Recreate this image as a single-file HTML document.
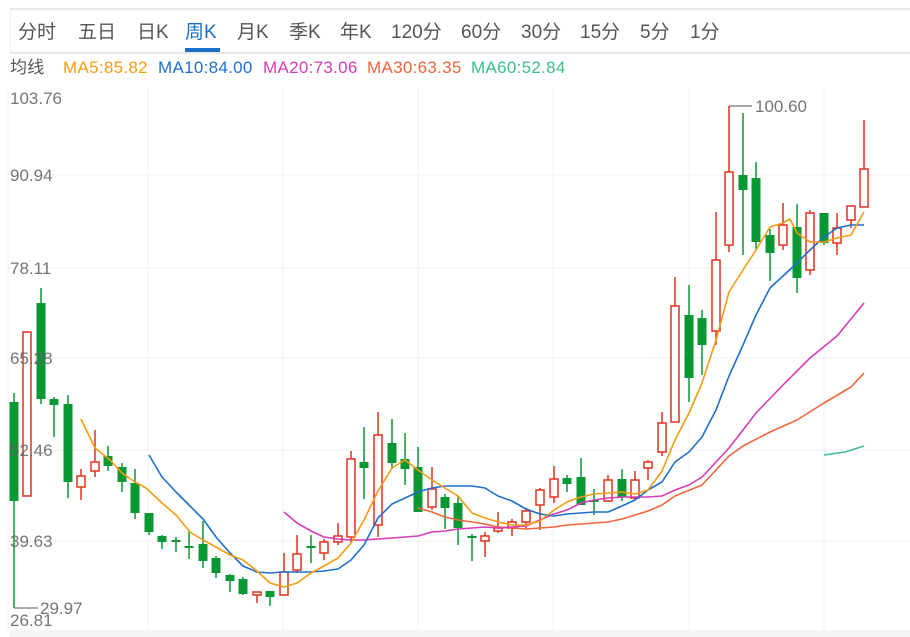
<!DOCTYPE html>
<html><head><meta charset="utf-8"><style>
html,body{margin:0;padding:0;background:#fff;width:910px;height:637px;overflow:hidden;font-family:"Liberation Sans","Noto Sans CJK SC",sans-serif}
.bar{position:absolute;left:10px;top:8px;width:900px;height:42px;border-top:2px solid #e8e8e8;border-bottom:2px solid #e8e8e8;border-left:1px solid #eee}
.t{position:absolute;top:20px;font-size:19px;color:#555;line-height:26px;white-space:nowrap}
.ul{position:absolute;left:185px;top:48px;width:35px;height:4px;background:#1a6fc9}
.lg{position:absolute;top:58px;font-size:17px;line-height:20px;white-space:nowrap;letter-spacing:0.3px}
svg{position:absolute;left:0;top:0}
</style></head><body>
<div class="bar"></div>
<div class="t" style="left:18px">分时</div>
<div class="t" style="left:78px">五日</div>
<div class="t" style="left:137px">日K</div>
<div class="t" style="left:185px;color:#1a6fc9">周K</div>
<div class="t" style="left:237px">月K</div>
<div class="t" style="left:289px">季K</div>
<div class="t" style="left:340px">年K</div>
<div class="t" style="left:391px">120分</div>
<div class="t" style="left:461px">60分</div>
<div class="t" style="left:521px">30分</div>
<div class="t" style="left:580px">15分</div>
<div class="t" style="left:640px">5分</div>
<div class="t" style="left:690px">1分</div>
<div class="ul"></div>
<div class="lg" style="left:10px;color:#555">均线</div>
<div class="lg" style="left:63px;color:#f39c12">MA5:85.82</div>
<div class="lg" style="left:158px;color:#1f6fcf">MA10:84.00</div>
<div class="lg" style="left:263px;color:#d63cb8">MA20:73.06</div>
<div class="lg" style="left:367px;color:#f0653c">MA30:63.35</div>
<div class="lg" style="left:471px;color:#3cc08a">MA60:52.84</div>
<svg width="910" height="637" viewBox="0 0 910 637">
<rect x="10" y="630" width="900" height="7" fill="#f5f5f5"/>
<g stroke="#f0f0f0" stroke-width="1">
<line x1="8" y1="88" x2="8" y2="630"/>
<line x1="8" y1="175" x2="910" y2="175"/><line x1="8" y1="268" x2="910" y2="268"/>
<line x1="8" y1="358" x2="910" y2="358"/><line x1="8" y1="450" x2="910" y2="450"/>
<line x1="8" y1="541" x2="910" y2="541"/>
<line x1="148" y1="88" x2="148" y2="630"/><line x1="283" y1="88" x2="283" y2="630"/>
<line x1="418" y1="88" x2="418" y2="630"/><line x1="553" y1="88" x2="553" y2="630"/>
<line x1="689" y1="88" x2="689" y2="630"/><line x1="824" y1="88" x2="824" y2="630"/>
</g>
<g id="c"></g>
<g fill="none" stroke-width="1.6" stroke-linejoin="round">
<polyline stroke="#f0653c" points="418,508 432,512 445,517 458,520 472,522 485,524 498,527 512,528 526,529 540,528 554,527 567,525 581,524 594,523 608,522 622,519 635,515 648,511 662,505 675,496 702,485 716,470 729,456 743,446 770,432 797,420 824,403 851,387 864,373"/>
<polyline stroke="#d63cb8" points="284,512 297,523 311,531 324,537 338,539 351,540 364,540 378,539 392,538 405,537 418,536 432,532 445,531 458,529 472,528 485,527 498,528 512,527 526,526 540,520 554,514 567,510 581,503 594,500 608,498 622,497 635,497 648,497 662,496 675,490 689,485 702,477 716,462 729,448 743,430 756,413 783,385 810,358 837,336 864,303"/>
<polyline stroke="#1f6fcf" points="149,455 162,477 176,492 189,505 203,519 216,537 230,553 243,566 257,572 270,573 283,572 297,572 311,572 324,571 338,569 351,560 364,545 378,518 392,504 405,498 418,492 432,488 445,486 458,486 472,486 485,488 498,496 512,501 526,509 540,514 554,516 567,514 581,513 594,512 608,512 622,506 635,500 648,490 662,482 675,462 689,452 702,437 716,410 729,376 743,345 756,315 770,288 783,276 797,263 810,250 824,237 837,228 851,225 864,225"/>
<polyline stroke="#f39c12" points="81,419 95,448 110,460 122,473 135,482 146,488 162,503 176,515 190,532 203,540 216,547 230,555 243,560 257,571 270,583 284,587 297,583 311,573 324,566 338,558 351,543 364,520 378,491 392,468 405,460 418,470 432,480 445,488 458,496 472,513 485,518 498,522 512,525 526,525 540,521 554,510 567,502 581,497 594,494 608,493 622,492 635,494 648,490 662,471 675,440 689,413 702,383 716,340 729,292 743,270 756,250 770,227 783,223 790,219 797,233 810,242 824,242 837,238 851,235 864,212"/>
<polyline stroke="#3cc08a" points="824,455 845,452 864,446"/>
</g>
<g stroke="#555" stroke-width="1"><line x1="729" y1="106" x2="752" y2="106"/><line x1="14" y1="608" x2="38" y2="608"/></g>
<g font-family="Liberation Sans, sans-serif" font-size="17" fill="#666" fill-opacity="0.9">
<text x="10" y="104">103.76</text><text x="10" y="181">90.94</text><text x="10" y="274">78.11</text>
<text x="10" y="364">65.28</text><text x="10" y="456">52.46</text><text x="10" y="547">39.63</text>
<text x="10" y="626">26.81</text><text x="40" y="614">29.97</text><text x="755" y="112">100.60</text>
</g>
</svg>
<script>
var G=[[14,393,402,501,608],[41,288,303,399,404],[54,397,399,405,437],[68,395,404,482,498],[108,446,456,466,471],[122,463,467,482,492],[135,469,483,513,519],[149,513,513,532,535],[162,535,536,542,549],[176,537,540,542,552],[189,530,546,548,559],[203,521,544,561,568],[216,556,558,573,578],[230,574,575,581,592],[243,577,579,594,595],[270,591,591,597,606],[311,535,546,548,563],[364,427,462,468,499],[392,419,443,463,469],[405,433,459,469,485],[418,447,467,512,512],[445,494,497,508,529],[458,496,503,528,545],[472,534,536,538,561],[567,475,478,484,492],[581,458,477,505,505],[594,489,500,502,515],[622,469,479,497,501],[689,285,315,378,402],[702,310,318,345,375],[743,113,175,190,255],[756,162,178,242,250],[770,229,235,253,281],[797,204,227,278,293],[824,213,213,243,245]];
var R=[[27,332,332,496,496],[81,469,476,487,500],[95,430,462,471,477],[257,592,592,595,603],[284,553,572,595,595],[297,535,554,570,573],[324,539,542,553,560],[338,523,536,542,545],[351,451,459,537,543],[378,412,435,525,537],[432,467,489,507,510],[485,532,536,541,557],[498,512,528,531,533],[512,519,522,528,536],[526,508,511,522,529],[540,488,490,505,530],[554,466,479,497,503],[608,475,480,501,502],[635,471,480,498,500],[648,460,462,468,480],[662,412,423,452,456],[675,277,306,422,422],[716,212,260,331,345],[729,106,172,245,252],[783,203,225,245,250],[810,210,213,270,275],[837,213,228,243,255],[851,206,206,220,228],[864,120,169,207,207]];
var s='';
G.forEach(function(c){s+='<line x1="'+c[0]+'" y1="'+c[1]+'" x2="'+c[0]+'" y2="'+c[4]+'" stroke="#089833" stroke-width="1.5"/><rect x="'+(c[0]-4.5)+'" y="'+c[2]+'" width="9" height="'+Math.max(2,c[3]-c[2])+'" fill="#089833"/>';});
R.forEach(function(c){s+='<line x1="'+c[0]+'" y1="'+c[1]+'" x2="'+c[0]+'" y2="'+c[4]+'" stroke="#e2301e" stroke-width="1.5"/><rect x="'+(c[0]-4)+'" y="'+c[2]+'" width="8" height="'+Math.max(2,c[3]-c[2])+'" fill="#fff" stroke="#e2301e" stroke-width="1.5"/>';});
document.getElementById('c').innerHTML=s;
</script>
</body></html>
